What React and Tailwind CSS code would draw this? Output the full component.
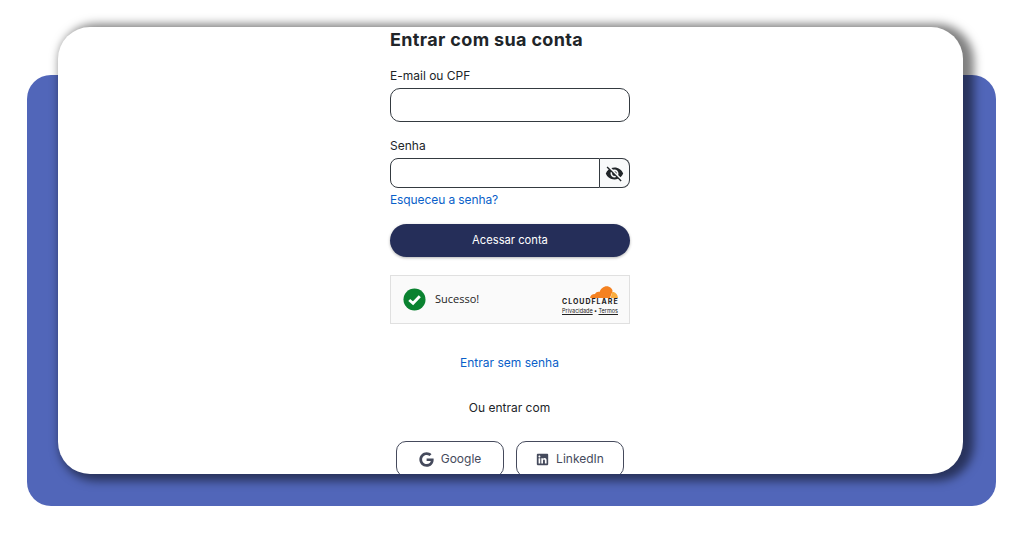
import { FaGoogle, FaLinkedin } from 'react-icons/fa';
import { MdVisibilityOff } from 'react-icons/md';

function CloudflareLogo() {
  return (
    <svg width="28" height="13" viewBox="0 0 28 13" className="block">
      <path d="M0 13 C0.5 10.5 2 9 5 9 C6 7 8 6.5 9.5 7 C11 2 17 -1 21 3 C22 4 22.5 5 22.6 6 L20 13 Z" fill="#f48120" />
      <path d="M20.6 13 L22.2 7 C25 6.5 27.5 9 28 13 Z" fill="#faad3f" />
    </svg>
  );
}

function SocialButton({ icon, label }) {
  return (
    <button className="w-[108px] h-[36px] shrink-0 flex items-center justify-center gap-[7px] border border-[#454a5c] rounded-[10px] bg-white text-[12px] text-[#454a5c]">
      {icon}
      {label}
    </button>
  );
}

export default function App() {
  return (
    <div className="w-[1024px] h-[536px] bg-white overflow-hidden pt-[75px] pl-[27px] font-['Inter',sans-serif]">
      <div className="w-[969px] h-[431px] bg-[#5166b9] rounded-[24px]">
        <div className="relative top-[-48px] left-[31px] w-[905px] h-[447px] pl-[332px] bg-white rounded-[32px] shadow-[6px_2px_10px_5px_rgba(0,0,0,0.5)] overflow-hidden flex">
          <div className="w-[240px] shrink-0 flex flex-col text-[#212529]">
            <h1 className="text-[18px] leading-[26px] font-bold tracking-[0.35px] shrink-0">Entrar com sua conta</h1>

            <label className="text-[12px] leading-[16px] mt-[15px] shrink-0">E-mail ou CPF</label>
            <input className="h-[34px] shrink-0 mt-[4px] border border-[#343a40] rounded-[10px] bg-white" />

            <label className="text-[12px] leading-[16px] mt-[16px] shrink-0">Senha</label>
            <div className="flex h-[30px] shrink-0 mt-[4px]">
              <input className="w-[210px] border border-[#343a40] rounded-l-[8px] bg-white" />
              <button className="w-[30px] flex items-center justify-center border border-l-0 border-[#343a40] rounded-r-[8px] bg-[#f8f9fa]">
                <MdVisibilityOff className="text-[19px] text-[#212529]" />
              </button>
            </div>
            <a className="text-[12px] leading-[16px] mt-[4px] shrink-0 text-[#0a5fc9] tracking-[-0.1px]">Esqueceu a senha?</a>

            <button className="h-[33px] shrink-0 mt-[16px] rounded-[17px] bg-[#252e59] text-white text-[11.2px] shadow-[0_1px_3px_rgba(0,0,0,0.3)]">Acessar conta</button>

            <div className="h-[49px] shrink-0 mt-[18px] flex items-center justify-between border border-[#e0e0e0] bg-[#fafafa] pl-[12px] pr-[12px]">
              <div className="flex items-center gap-[9px]">
                <svg width="23" height="23" viewBox="0 0 24 24">
                  <circle cx="12" cy="12" r="11.5" fill="#0a8230" />
                  <path d="M6.5 12.5 L10.5 16 L17.5 8.5" fill="none" stroke="#fff" strokeWidth="3" />
                </svg>
                <span className="text-[11px] text-[#232323] font-['Open_Sans',sans-serif]">Sucesso!</span>
              </div>
              <div className="w-[56px] flex flex-col items-end -mr-[1px]">
                <CloudflareLogo />
                <span className="w-[56px] text-[7px] leading-[8px] font-bold tracking-[1px] text-[#222] whitespace-nowrap">CLOUDFLARE</span>
                <div className="w-[56px] mt-[2px] flex justify-between text-[5.5px] leading-[6px] text-[#222] whitespace-nowrap">
                  <span className="underline">Privacidade</span>
                  <span>•</span>
                  <span className="underline">Termos</span>
                </div>
              </div>
            </div>

            <a className="text-[12px] leading-[16px] mt-[31px] pr-[1px] shrink-0 text-center text-[#0a5fc9]">Entrar sem senha</a>
            <p className="text-[12px] leading-[16px] mt-[29px] pr-[1px] shrink-0 text-center text-[#212529]">Ou entrar com</p>

            <div className="flex justify-center gap-[12px] mt-[25px] shrink-0">
              <SocialButton icon={<FaGoogle className="text-[15px]" />} label="Google" />
              <SocialButton icon={<FaLinkedin className="text-[13px]" />} label="LinkedIn" />
            </div>
          </div>
        </div>
      </div>
    </div>
  );
}
